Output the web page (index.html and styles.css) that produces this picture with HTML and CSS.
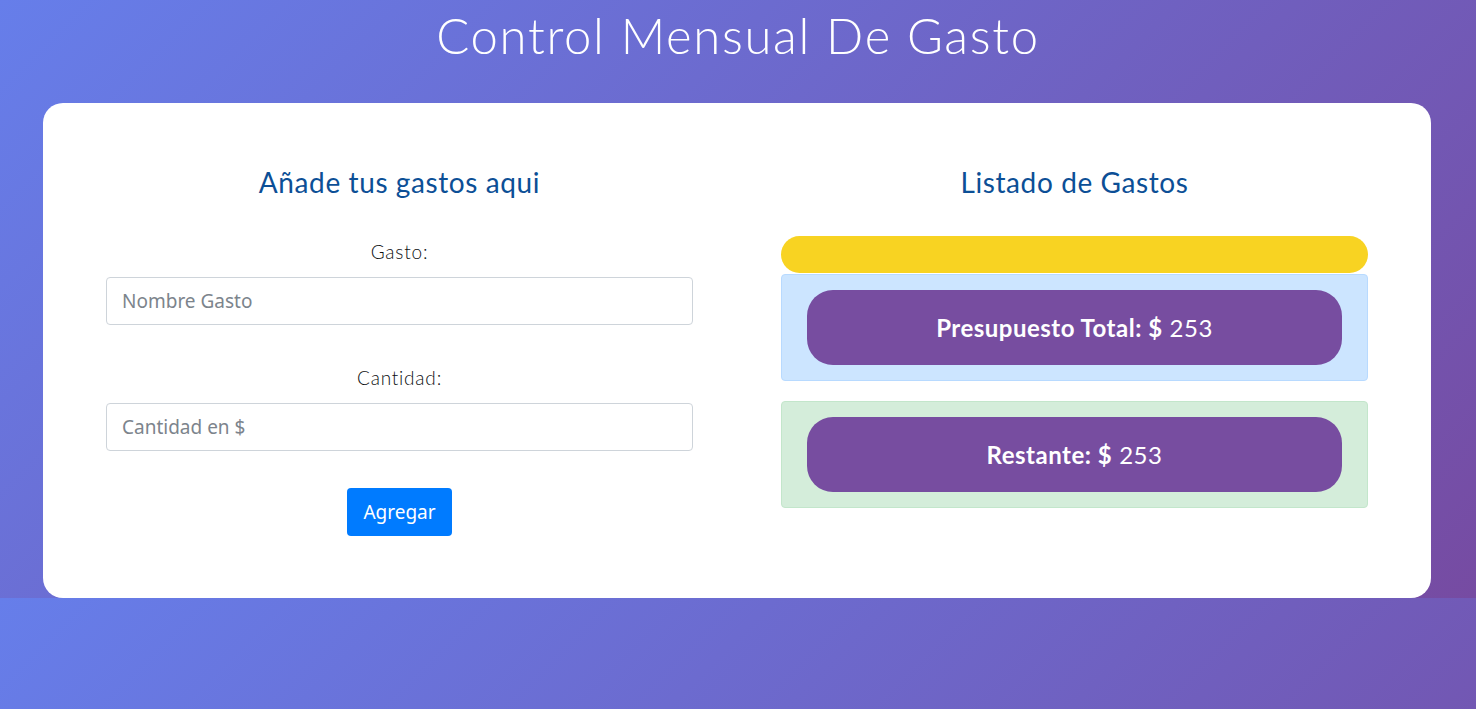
FILE: index.html
```html
<!DOCTYPE html>
<html lang="es">
<head>
<meta charset="utf-8">
<title>Control Mensual De Gasto</title>
<link rel="stylesheet" href="styles.css">
</head>
<body>
<h1 class="title">Control Mensual De Gasto</h1>
<main class="card">
  <section class="col">
    <h2 class="col-title">Añade tus gastos aqui</h2>
    <form class="form">
      <label class="label" for="gasto">Gasto:</label>
      <input class="input" id="gasto" type="text" placeholder="Nombre Gasto">
      <label class="label label-second" for="cantidad">Cantidad:</label>
      <input class="input" id="cantidad" type="text" placeholder="Cantidad en $">
      <button class="btn" type="button">Agregar</button>
    </form>
  </section>
  <section class="col">
    <h2 class="col-title">Listado de Gastos</h2>
    <div class="bar"></div>
    <div class="alert alert-primary">
      <div class="pill"><strong>Presupuesto Total: $</strong> <span>253</span></div>
    </div>
    <div class="alert alert-success">
      <div class="pill"><strong>Restante: $</strong> <span>253</span></div>
    </div>
  </section>
</main>
</body>
</html>
```
FILE: styles.css
```css
* { box-sizing: border-box; }
body {
  margin: 0;
  font-family: Lato, "Liberation Sans", sans-serif;
  background-image: linear-gradient(135deg, #667eea 0%, #764ba2 100%);
  background-size: 100% 598px;
  background-repeat: repeat;
}
.title {
  margin: 6px 0 0;
  text-align: center;
  color: #fff;
  font-weight: 300;
  font-size: 49px;
  line-height: 58px;
  letter-spacing: 1.7px;
}
.card {
  margin: 39px 0 0 43px;
  width: 1388px;
  background: #fff;
  border-radius: 20px;
  padding: 62px 19px;
  display: flex;
  align-items: flex-start;
}
.col {
  flex: 1;
  padding: 0 44px;
}
.col-title {
  margin: 0;
  text-align: center;
  font-weight: 400;
  font-size: 28px;
  line-height: 34px;
  letter-spacing: 0.6px;
  color: #0c4f96;
}
.form {
  display: flex;
  flex-direction: column;
  align-items: stretch;
  margin-top: 39px;
}
.label {
  text-align: center;
  font-size: 19px;
  font-weight: 300;
  letter-spacing: 0.8px;
  line-height: 27px;
  color: #0d0f12;
  margin-bottom: 12px;
}
.label-second { margin-top: 39px; }
.input {
  height: 48px;
  border: 1px solid #ced4da;
  border-radius: 4px;
  padding: 0 15px;
  font-family: "Noto Sans", "Open Sans", sans-serif;
  font-size: 19px;
  color: #495057;
}
.input::placeholder { color: #7c848c; }
.btn {
  align-self: center;
  margin-top: 37px;
  height: 48px;
  padding: 0 16px;
  border: none;
  border-radius: 4px;
  background: #007bff;
  color: #fff;
  font-family: "Noto Sans", "Open Sans", sans-serif;
  font-size: 19px;
}
.bar {
  margin-top: 37px;
  height: 37px;
  border-radius: 19px;
  background: #f8d322;
}
.alert {
  border: 1px solid;
  border-radius: 4px;
  padding: 15px 25px;
}
.alert-primary {
  margin-top: 1px;
  background: #cce5ff;
  border-color: #b8daff;
}
.alert-success {
  margin-top: 20px;
  background: #d4edda;
  border-color: #c3e6cb;
}
.pill {
  height: 75px;
  border-radius: 26px;
  background: #774da0;
  color: #fff;
  display: flex;
  align-items: center;
  justify-content: center;
  gap: 7px;
  font-size: 24px;
  letter-spacing: 0.5px;
}
.pill strong { font-weight: 700; }
.pill span { font-weight: 400; }
```
